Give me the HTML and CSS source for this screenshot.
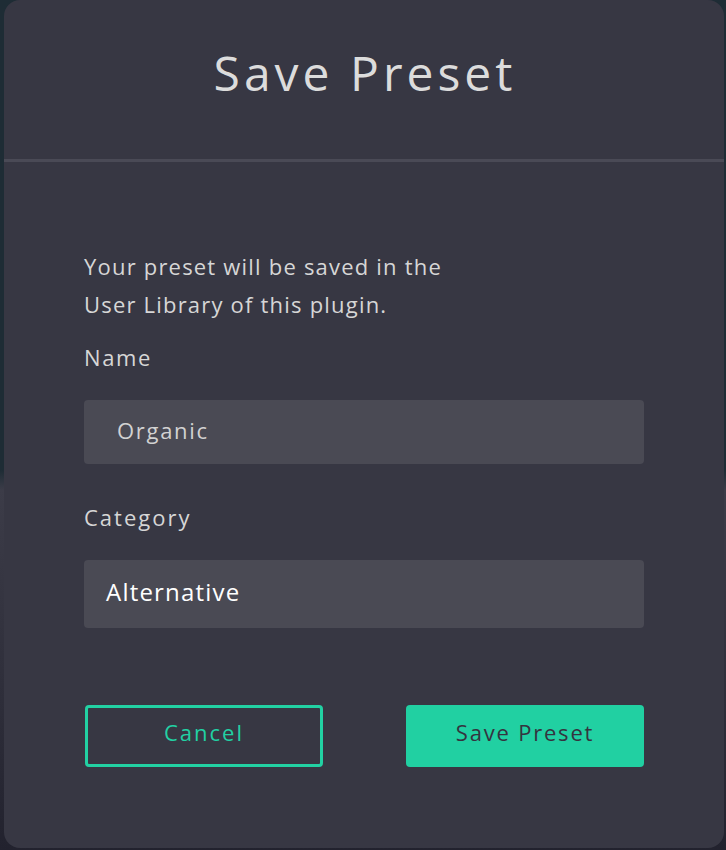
FILE: index.html
```html
<!DOCTYPE html>
<html>
<head>
<meta charset="utf-8">
<link rel="stylesheet" href="styles.css">
</head>
<body>
<div class="backdrop">
  <div class="dialog">
    <div class="header">
      <h1 class="title">Save Preset</h1>
    </div>
    <div class="content">
      <p class="intro">Your preset will be saved in the<br>User Library of this plugin.</p>
      <label class="label">Name</label>
      <div class="field field-name">Organic</div>
      <label class="label label-cat">Category</label>
      <div class="field field-cat">Alternative</div>
      <div class="actions">
        <button class="btn btn-outline">Cancel</button>
        <button class="btn btn-fill">Save Preset</button>
      </div>
    </div>
  </div>
</div>
</body>
</html>
```

FILE: styles.css
```css
html, body {
  margin: 0;
  padding: 0;
  width: 726px;
  height: 850px;
  overflow: hidden;
}
body {
  font-family: "Open Sans", "Lato", sans-serif;
}
.backdrop {
  width: 726px;
  height: 850px;
  background: linear-gradient(180deg, #1e2c35 0px, #1e2c35 470px, #3c3c48 490px, #2e2e3a 700px, #22222e 850px);
  padding: 0 2px 2px 4px;
  box-sizing: border-box;
}
.dialog {
  height: 848px;
  background: #373743;
  border-radius: 16px;
  display: flex;
  flex-direction: column;
}
.header {
  height: 159px;
  border-bottom: 3px solid #4a4a56;
  display: flex;
  justify-content: center;
}
.title {
  margin: 45px 0 0;
  font-size: 48px;
  font-weight: 400;
  color: #dcdcdc;
  line-height: 56px;
  letter-spacing: 4px;
  padding-left: 2px;
}
.content {
  padding: 0 80px 0 80px;
  display: flex;
  flex-direction: column;
}
.intro {
  margin: 85px 0 0;
  font-size: 22px;
  line-height: 38px;
  color: #d6d6d6;
  letter-spacing: 1.2px;
}
.label {
  display: block;
  font-size: 22px;
  color: #d6d6d6;
  line-height: 28px;
  margin-top: 20px;
  letter-spacing: 1.6px;
}
.label-cat {
  margin-top: 39px;
  letter-spacing: 2px;
}
.field {
  background: #4a4a54;
  border-radius: 4px;
  box-sizing: border-box;
  display: flex;
  align-items: center;
  padding-bottom: 5px;
}
.field-name {
  margin-top: 29px;
  height: 64px;
  padding-left: 33px;
  font-size: 22px;
  color: #d2d2d2;
  letter-spacing: 1.7px;
}
.field-cat {
  margin-top: 29px;
  height: 68px;
  padding-left: 22px;
  font-size: 24px;
  font-weight: 500;
  color: #ffffff;
  letter-spacing: 1.2px;
}
.actions {
  margin-top: 77px;
  display: flex;
  justify-content: space-between;
}
.btn {
  width: 238px;
  height: 62px;
  border-radius: 4px;
  font-family: inherit;
  font-size: 22px;
  cursor: pointer;
  box-sizing: border-box;
  margin: 0;
  padding: 0 0 8px;
  letter-spacing: 2px;
}
.btn-outline {
  background: transparent;
  border: 3px solid #22d1a3;
  color: #22d1a3;
  margin-left: 1px;
}
.btn-fill {
  background: #21d0a2;
  border: none;
  color: #34343f;
  letter-spacing: 1.8px;
}
```
